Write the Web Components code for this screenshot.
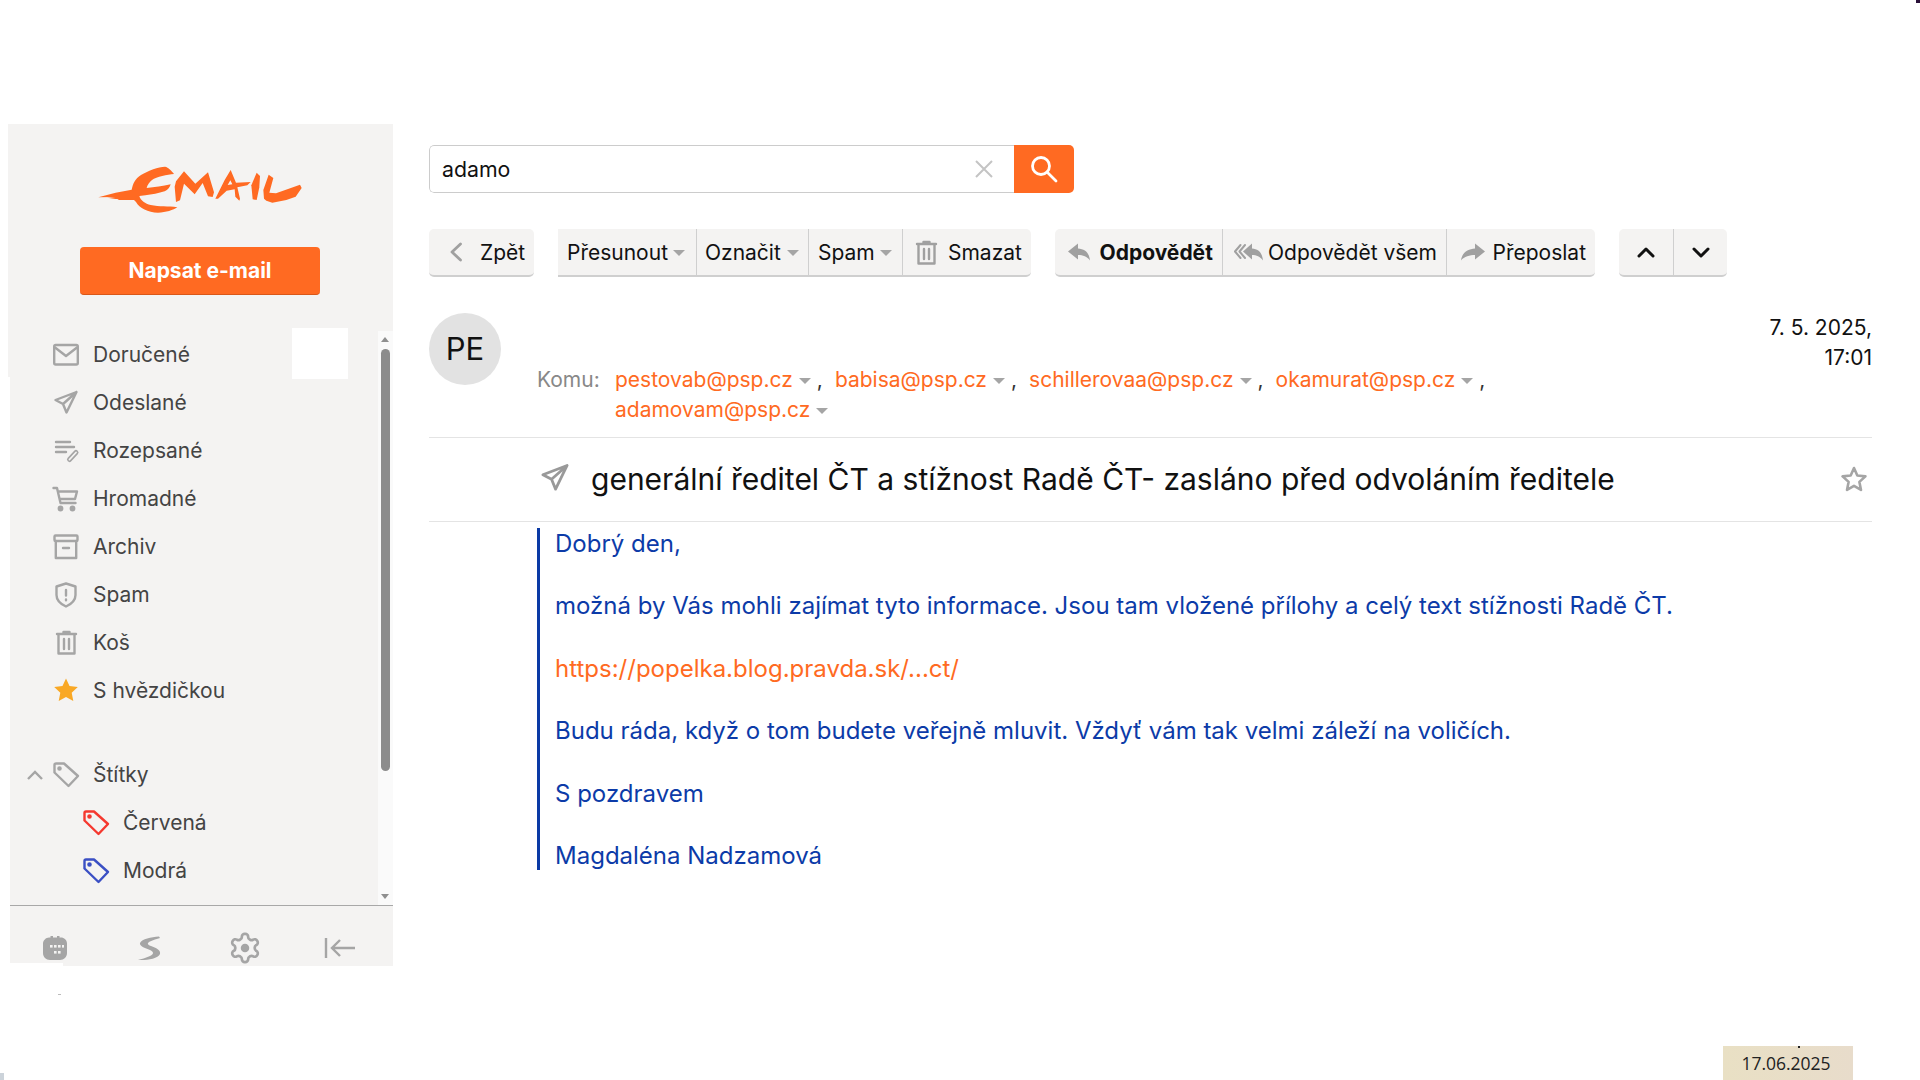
<!DOCTYPE html>
<html lang="cs">
<head>
<meta charset="utf-8">
<title>Email</title>
<style>
  html, body { margin: 0; padding: 0; background: #fff; }
  body { font-family: Inter, "Liberation Sans", sans-serif; width: 1920px; height: 1080px; overflow: hidden; }
</style>
</head>
<body>
<mail-app>
  <mail-sidebar slot="sidebar">
    <nav-item icon="inbox">Doručené</nav-item>
    <nav-item icon="sent">Odeslané</nav-item>
    <nav-item icon="draft">Rozepsané</nav-item>
    <nav-item icon="cart">Hromadné</nav-item>
    <nav-item icon="archive">Archiv</nav-item>
    <nav-item icon="shield">Spam</nav-item>
    <nav-item icon="trash">Koš</nav-item>
    <nav-item icon="star">S hvězdičkou</nav-item>
    <nav-item icon="tag" toggle style="margin-top:36px">Štítky</nav-item>
    <nav-item icon="tag" color="#f5382f" sub>Červená</nav-item>
    <nav-item icon="tag" color="#3a4fc4" sub>Modrá</nav-item>
  </mail-sidebar>

  <mail-search value="adamo"></mail-search>

  <mail-toolbar>
    <tool-group>
      <tool-button icon="back" w="105" gap="17">Zpět</tool-button>
    </tool-group>
    <tool-group square>
      <tool-button caret w="138" pad="9">Přesunout</tool-button>
      <tool-button caret w="112">Označit</tool-button>
      <tool-button caret w="94" pad="9">Spam</tool-button>
      <tool-button icon="trash" w="129" pad="10" gap="9">Smazat</tool-button>
    </tool-group>
    <tool-group>
      <tool-button icon="reply" iw="30" w="167" gap="6.500" bold>Odpovědět</tool-button>
      <tool-button icon="replyall" iw="32" w="224" gap="5">Odpovědět všem</tool-button>
      <tool-button icon="forward" iw="30" w="149" gap="7.500">Přeposlat</tool-button>
    </tool-group>
    <tool-group>
      <tool-button icon="up" w="54" center></tool-button>
      <tool-button icon="down" w="54" center></tool-button>
    </tool-group>
  </mail-toolbar>

  <mail-header initials="PE" date="7. 5. 2025,|17:01">
    <mail-recipient>pestovab@psp.cz</mail-recipient>
    <mail-recipient>babisa@psp.cz</mail-recipient>
    <mail-recipient>schillerovaa@psp.cz</mail-recipient>
    <mail-recipient>okamurat@psp.cz</mail-recipient>
    <mail-recipient last>adamovam@psp.cz</mail-recipient>
  </mail-header>

  <mail-subject>generální ředitel ČT a stížnost Radě ČT- zasláno před odvoláním ředitele</mail-subject>

  <mail-body>
    <p>Dobrý den,</p>
    <p>možná by Vás mohli zajímat tyto informace. Jsou tam vložené přílohy a celý text stížnosti Radě ČT.</p>
    <p><a style="color:#ff6a22">https://popelka.blog.pravda.sk/...ct/</a></p>
    <p>Budu ráda, když o tom budete veřejně mluvit. Vždyť vám tak velmi záleží na voličích.</p>
    <p>S pozdravem</p>
    <p>Magdaléna Nadzamová</p>
  </mail-body>

  <date-badge slot="overlay">17.06.2025</date-badge>
</mail-app>

<script>
const GREY = "#a5a5a5";

// nav and toolbar icons share a 26 high box, a few toolbar arrows are wider
const ICONS = {
  inbox: `<rect x="1.200" y="4" width="23.600" height="19.500" rx="1.500"/><path d="M2 6.500l11 8.500 11-8.500"/>`,
  sent: `<path d="M23.500 3L2.500 11l7.500 4 3.500 8.500zM23.500 3L10 15"/>`,
  draft: `<path d="M3 5h14M3 10h18M3 15h10"/><path d="M16.500 22.500l6.500-7" stroke-width="5"/><path d="M16.500 22.500l6.500-7" stroke-width="1.800" stroke="#f4f3f2"/>`,
  cart: `<path d="M.5 3h3.500l3.500 15h15M5 6.500h19l-2 7.500H7"/><circle cx="7.500" cy="23.500" r="1.700" fill="currentColor"/><circle cx="19.500" cy="23.500" r="1.700" fill="currentColor"/>`,
  archive: `<rect x="1.500" y="2.500" width="23" height="5.500" rx="1"/><path d="M2.800 8v17h20.400V8M10 15h6"/>`,
  shield: `<path d="M13 2.500l9.500 3v8.500c0 5.500-4 9-9.500 11.500C7.500 23 3.500 19.500 3.500 14V5.500z"/><path d="M13 9v5.500M13 18.500v.8"/>`,
  trash: `<path d="M4 5h19M10.500 5V3h6v2M5.500 5v19.500h16V5M11 10v10M16 10v10"/>`,
  star: `<path d="M13 1.500l3.500 7.600 8.300 1-6.100 5.700 1.600 8.200-7.300-4.100-7.300 4.100 1.600-8.200-6.100-5.700 8.300-1z" fill="#f9a825" stroke="none"/>`,
  tag: `<path d="M1.500 4c0-1 .5-1.500 1.500-1.500h8l14 12.500-9.500 10L1.500 11.500z"/><circle cx="6.500" cy="7.500" r="1.100" fill="currentColor"/>`,
  back: `<path d="M23.500 5l-8.500 8 8.500 8" stroke-width="2.800"/>`,
  reply: `<path d="M15 4.500L5 12.500l10 8V16c5 0 9 1.500 12 5.500-1-8-5-11.500-12-12z" fill="currentColor" stroke="none"/>`,
  replyall: `<path d="M21 4.500l-9 8 9 8V16c4.500 0 8 1.500 11 5.500-1-8-4.500-11.500-11-12z" fill="currentColor" stroke="none"/><path d="M9.500 6L4 12.500l5.500 6.500M14 6L8.500 12.500 14 19" stroke-width="2"/>`,
  forward: `<path d="M20 4.500l10 8-10 8V16c-5 0-11 1.500-14 5.500 1-8 7-11.500 14-12z" fill="currentColor" stroke="none"/>`,
  up: `<path d="M6 17l7-7 7 7" stroke-width="3" stroke="#111"/>`,
  down: `<path d="M6 10l7 7 7-7" stroke-width="3" stroke="#111"/>`
};

function iconSvg(name, size = 26, width = size) {
  return `<svg viewBox="0 0 ${width * 26 / size} 26" width="${width}" height="${size}" fill="none" stroke="currentColor" stroke-width="2.400" stroke-linecap="round" stroke-linejoin="round" aria-hidden="true" style="overflow:visible">${ICONS[name]}</svg>`;
}

class MailApp extends HTMLElement {
  constructor() {
    super();
    this.attachShadow({ mode: "open" });
    this.shadowRoot.innerHTML = `
      <style>
        :host {
          display: grid;
          grid-template-columns: 383px 1443px;
          column-gap: 36px;
          padding: 124px 0 0 10px;
          height: 1080px;
          box-sizing: border-box;
          position: relative;
        }
        .main { display: flex; flex-direction: column; padding-top: 21px; }
        /* stray pixels left in the corners of the screenshot */
        .speck { position: absolute; }
        .speck.a { left: 1916px; top: 0; width: 4px; height: 3px; background: #2a1038; }
        .speck.b { left: 58px; top: 994px; width: 3px; height: 1px; background: #bbb; }
        .speck.c { left: 0; top: 1073px; width: 4px; height: 7px; background: #ccd3da; }
      </style>
      <slot name="sidebar"></slot>
      <div class="main"><slot></slot></div>
      <slot name="overlay"></slot>
      <i class="speck a"></i><i class="speck b"></i><i class="speck c"></i>
    `;
  }
}

class MailSidebar extends HTMLElement {
  constructor() {
    super();
    this.attachShadow({ mode: "open" });
    this.shadowRoot.innerHTML = `
      <style>
        :host {
          display: flex;
          flex-direction: column;
          height: 842px;
          background: #f4f3f2;
          position: relative;
        }
        /* uneven edges of the panel in the reference */
        :host::before {
          content: "";
          position: absolute;
          left: -2px;
          top: 0;
          width: 2px;
          height: 253px;
          background: #f4f3f2;
        }
        :host::after {
          content: "";
          position: absolute;
          left: 0;
          bottom: 0;
          width: 53px;
          height: 3px;
          background: #fff;
        }
        .logo { display: block; margin: 26px 0 0 70px; }
        .write {
          display: flex;
          align-items: center;
          justify-content: center;
          width: 240px;
          height: 48px;
          margin: 7px 0 0 70px;
          box-sizing: border-box;
          background: #ff6a22;
          border-bottom: 1px solid #d9581a;
          border-radius: 4px;
          color: #fff;
          font-size: 21px;
          font-weight: 700;
        }
        .list {
          flex: 1;
          min-height: 0;
          position: relative;
          margin-top: 35px;
        }
        .blank {
          position: absolute;
          left: 282px;
          top: -2px;
          width: 56px;
          height: 51px;
          background: #fff;
        }
        .scroll {
          position: absolute;
          right: 0;
          top: 1px;
          bottom: 0;
          width: 15px;
          background: #fafafa;
        }
        .thumb {
          position: absolute;
          left: 3px;
          top: 18px;
          width: 9px;
          height: 422px;
          background: #8c8c8c;
          border-radius: 5px;
        }
        .arrow {
          position: absolute;
          left: 3px;
          width: 0;
          height: 0;
          border-left: 4.500px solid transparent;
          border-right: 4.500px solid transparent;
        }
        .arrow.up { top: 6px; border-bottom: 5px solid #8f8f8f; }
        .arrow.down { bottom: 6px; border-top: 5px solid #8f8f8f; }
        .foot {
          height: 61px;
          box-sizing: border-box;
          border-top: 1px solid #a8a8a8;
          padding-top: 24px;
          display: grid;
          grid-template-columns: repeat(4, 95px);
          color: ${GREY};
        }
        .foot div { display: flex; height: 36px; align-items: center; justify-content: center; margin-left: -6px; }
      </style>
      <svg class="logo" viewBox="0 0 720 270" width="240" height="90" fill="#ff6a22" role="img" aria-label="Email">
        <path d="M55 142l52-14 48-9c4-18 10-33 28-44 22-13 52-25 72-25 10 2 20 12 27 22-20 2-52 8-66 18-8 6-14 15-16 24 24-2 48-6 72-11-2 8-8 17-18 21-18 6-38 10-58 12l-18 2c4 14 18 23 34 27 26 6 52 2 80 7-12 8-34 16-58 16-30 0-56-14-66-32l-6-6-50 0 5-3-30 0 20-3-26-1 24-2z"/>
        <path d="M288 156l-4-46 4-16 24-30 34 37 38-34 18 60-4 14-14-2-16-40-24 34-32-32-12 50z"/>
        <path fill-rule="evenodd" d="M406 146l28-56 18-30 16 38 44-2-10 10-30 6 8 34-2 6-12-12-2-22-24 4-26 24zM451 91l-8 14 14-2z"/>
        <path d="M518 148l-4-42 16-38 10 10-2 34-8 38z"/>
        <path d="M552 146l-2-26 16-46 14 10-12 44 20 2 72-26 5 10-18 26-28 10-42 8-18-6z"/>
      </svg>
      <div class="write">Napsat e-mail</div>
      <div class="list">
        <slot></slot>
        <div class="blank"></div>
        <div class="scroll">
          <div class="arrow up"></div>
          <div class="thumb"></div>
          <div class="arrow down"></div>
        </div>
      </div>
      <div class="foot">
        <div>
          <svg viewBox="0 0 24 24" width="24" height="24" fill="currentColor"><path d="M6 1.500h1.500V0h2.500v1.500h4V0h2.500v1.500H18c3 0 6 2.500 6 6V17c0 4-3 7-7 7H7c-4 0-7-3-7-7V7.500c0-3 3-6 6-6z"/><g fill="#f4f3f2"><rect x="7" y="9" width="2.600" height="2.600"/><rect x="11" y="9" width="2.600" height="2.600"/><rect x="15" y="9" width="2.600" height="2.600"/><rect x="19" y="9" width="2" height="2.600"/><rect x="11" y="15" width="2.600" height="2.600"/><rect x="15" y="15" width="2.600" height="2.600"/></g></svg>
        </div>
        <div>
          <svg viewBox="0 0 26 26" width="26" height="26" fill="currentColor"><path d="M22 1.500C14 2 5 4 3 8c-1 3 5 5 10 7 4 2 4 4 0 6-4 2-9 3-12 4 8 .5 20-1 22-6 1-4-4-6-9-8-4-1.500-4-3-1-4.500 3-1.500 7-2.500 10-3.500z"/></svg>
        </div>
        <div>
          <svg viewBox="0 0 24 24" width="34" height="34" fill="none" stroke="currentColor" stroke-width="1.900" stroke-linejoin="round"><path d="M12.220 2h-.44a2 2 0 0 0-2 2v.18a2 2 0 0 1-1 1.730l-.43.250a2 2 0 0 1-2 0l-.15-.08a2 2 0 0 0-2.730.73l-.22.38a2 2 0 0 0 .73 2.730l.15.1a2 2 0 0 1 1 1.720v.51a2 2 0 0 1-1 1.740l-.15.09a2 2 0 0 0-.73 2.730l.22.38a2 2 0 0 0 2.730.73l.15-.08a2 2 0 0 1 2 0l.43.25a2 2 0 0 1 1 1.730V20a2 2 0 0 0 2 2h.44a2 2 0 0 0 2-2v-.18a2 2 0 0 1 1-1.730l.43-.25a2 2 0 0 1 2 0l.15.08a2 2 0 0 0 2.730-.73l.22-.39a2 2 0 0 0-.73-2.730l-.15-.08a2 2 0 0 1-1-1.740v-.5a2 2 0 0 1 1-1.740l.15-.09a2 2 0 0 0 .73-2.730l-.22-.38a2 2 0 0 0-2.730-.73l-.15.08a2 2 0 0 1-2 0l-.43-.25a2 2 0 0 1-1-1.730V4a2 2 0 0 0-2-2z"/><circle cx="12" cy="12" r="3" fill="currentColor" stroke="none"/></svg>
        </div>
        <div>
          <svg viewBox="0 0 32 26" width="32" height="26" fill="none" stroke="currentColor" stroke-width="2.400"><path d="M2 3v20M31 13H9M16 5l-8 8 8 8"/></svg>
        </div>
      </div>
    `;
  }
}

class NavItem extends HTMLElement {
  constructor() {
    super();
    this.attachShadow({ mode: "open" });
  }

  connectedCallback() {
    const sub = this.hasAttribute("sub");
    const color = this.getAttribute("color") || GREY;
    const toggle = this.hasAttribute("toggle")
      ? `<svg class="toggle" viewBox="0 0 16 10" width="16" height="10" fill="none" stroke="${GREY}" stroke-width="2.400"><path d="M1 9l7-7 7 7"/></svg>`
      : "";
    this.shadowRoot.innerHTML = `
      <style>
        :host {
          display: flex;
          align-items: center;
          height: 48px;
          padding-left: ${sub ? 73 : 43}px;
          position: relative;
          color: #444;
          font-size: 21px;
        }
        .ic { display: flex; color: ${color}; margin-right: 14px; }
        .toggle { position: absolute; left: 17px; top: 20px; }
      </style>
      ${toggle}
      <span class="ic">${iconSvg(this.getAttribute("icon"))}</span>
      <slot></slot>
    `;
  }
}

class MailSearch extends HTMLElement {
  constructor() {
    super();
    this.attachShadow({ mode: "open" });
  }

  connectedCallback() {
    this.shadowRoot.innerHTML = `
      <style>
        :host {
          display: flex;
          width: 645px;
          height: 48px;
          box-sizing: border-box;
          border-radius: 5px;
          overflow: hidden;
          font-size: 21.300px;
          color: #111;
        }
        .field {
          flex: 1;
          display: flex;
          align-items: center;
          justify-content: space-between;
          padding: 0 21px 0 12px;
          border: 1px solid #ccc;
          border-right: none;
          border-radius: 5px 0 0 5px;
        }
        .go {
          width: 60px;
          background: #ff6a22;
          display: flex;
          align-items: center;
          justify-content: center;
        }
      </style>
      <div class="field">
        <span>${this.getAttribute("value")}</span>
        <svg viewBox="0 0 18 18" width="18" height="18" stroke="#c4c4c4" stroke-width="2"><path d="M1 1l16 16M17 1L1 17"/></svg>
      </div>
      <div class="go">
        <svg viewBox="0 0 28 28" width="28" height="28" fill="none" stroke="#fff" stroke-width="2.800" stroke-linecap="round"><circle cx="11" cy="11" r="8.500"/><path d="M17 17l9 9"/></svg>
      </div>
    `;
  }
}

class MailToolbar extends HTMLElement {
  constructor() {
    super();
    this.attachShadow({ mode: "open" });
    this.shadowRoot.innerHTML = `
      <style>
        :host { display: flex; gap: 24px; margin-top: 36px; height: 48px; }
      </style>
      <slot></slot>
    `;
  }
}

class ToolGroup extends HTMLElement {
  constructor() {
    super();
    this.attachShadow({ mode: "open" });
  }

  connectedCallback() {
    const radius = this.hasAttribute("square") ? "0 5px 5px 0" : "5px";
    this.shadowRoot.innerHTML = `
      <style>
        :host {
          display: flex;
          background: #f4f3f2;
          border-bottom: 2px solid #cfcfcf;
          border-radius: ${radius};
          box-sizing: border-box;
          height: 48px;
        }
        ::slotted(tool-button:not(:first-child)) { border-left: 1px solid #cfcfcf; }
      </style>
      <slot></slot>
    `;
  }
}

class ToolButton extends HTMLElement {
  constructor() {
    super();
    this.attachShadow({ mode: "open" });
  }

  connectedCallback() {
    const icon = this.getAttribute("icon");
    const caret = this.hasAttribute("caret") ? `<span class="caret"></span>` : "";
    const center = this.hasAttribute("center");
    const pad = center ? 0 : this.getAttribute("pad") || 8;
    const iw = Number(this.getAttribute("iw")) || 26;
    this.shadowRoot.innerHTML = `
      <style>
        :host {
          display: flex;
          align-items: center;
          justify-content: ${center ? "center" : "flex-start"};
          box-sizing: border-box;
          width: ${this.getAttribute("w")}px;
          padding-left: ${pad}px;
          font-size: 21px;
          font-weight: ${this.hasAttribute("bold") ? 700 : 400};
          color: #111;
          white-space: nowrap;
        }
        .ic { display: flex; color: #a0a0a0; margin-right: ${this.getAttribute("gap") || 0}px; }
        .caret {
          width: 0;
          height: 0;
          margin: 2px 0 0 ${Number(pad) === 9 ? 5 : 6}px;
          border-left: 6px solid transparent;
          border-right: 6px solid transparent;
          border-top: 6px solid ${GREY};
        }
      </style>
      ${icon ? `<span class="ic">${iconSvg(icon, 26, iw)}</span>` : ""}
      <slot></slot>
      ${caret}
    `;
  }
}

class MailHeader extends HTMLElement {
  constructor() {
    super();
    this.attachShadow({ mode: "open" });
  }

  connectedCallback() {
    const date = this.getAttribute("date").split("|").join("<br>");
    this.shadowRoot.innerHTML = `
      <style>
        :host {
          display: flex;
          align-items: flex-start;
          box-sizing: border-box;
          height: 125px;
          margin-top: 36px;
          border-bottom: 1px solid #e4e4e4;
          font-size: 21px;
          line-height: 30px;
        }
        .avatar {
          flex: none;
          width: 72px;
          height: 72px;
          border-radius: 50%;
          background: #e2e2e2;
          display: flex;
          align-items: center;
          justify-content: center;
          font-size: 31px;
          color: #111;
        }
        .komu { flex: none; width: 78px; margin: 52px 0 0 36px; color: #888; }
        .to { display: flex; flex-wrap: wrap; width: 1000px; margin-top: 52px; }
        .date { margin-left: auto; text-align: right; color: #111; }
      </style>
      <div class="avatar">${this.getAttribute("initials")}</div>
      <div class="komu">Komu:</div>
      <div class="to"><slot></slot></div>
      <div class="date">${date}</div>
    `;
  }
}

class MailRecipient extends HTMLElement {
  constructor() {
    super();
    this.attachShadow({ mode: "open" });
  }

  connectedCallback() {
    this.shadowRoot.innerHTML = `
      <style>
        :host { display: flex; align-items: center; color: #ff6a22; }
        .caret {
          width: 0;
          height: 0;
          margin: 2px 0 0 6px;
          border-left: 6px solid transparent;
          border-right: 6px solid transparent;
          border-top: 6px solid ${GREY};
        }
        .comma { color: #333; margin: 0 12px 0 6px; }
      </style>
      <slot></slot>
      <span class="caret"></span>
      ${this.hasAttribute("last") ? "" : `<span class="comma">,</span>`}
    `;
  }
}

class MailSubject extends HTMLElement {
  constructor() {
    super();
    this.attachShadow({ mode: "open" });
    this.shadowRoot.innerHTML = `
      <style>
        :host {
          display: flex;
          align-items: center;
          box-sizing: border-box;
          height: 84px;
          padding: 0 0 2px 111px;
          border-bottom: 1px solid #e4e4e4;
          font-size: 30px;
          color: #111;
        }
        .sent { display: flex; color: #999; margin-right: 21px; margin-top: -3px; }
        .text { flex: 1; }
        .fav { display: flex; color: ${GREY}; margin-right: 5px; }
      </style>
      <span class="sent">${iconSvg("sent", 30)}</span>
      <span class="text"><slot></slot></span>
      <span class="fav">
        <svg viewBox="0 0 26 26" width="26" height="26" fill="none" stroke="currentColor" stroke-width="2.600" stroke-linejoin="round"><path d="M13 2l3.300 7.500 8.100.9-6 5.500 1.600 8-7-4.100-7 4.100 1.600-8-6-5.500 8.100-.9z"/></svg>
      </span>
    `;
  }
}

class MailBody extends HTMLElement {
  constructor() {
    super();
    this.attachShadow({ mode: "open" });
    this.shadowRoot.innerHTML = `
      <style>
        :host {
          display: block;
          box-sizing: border-box;
          height: 342px;
          margin: 6px 0 0 108px;
          padding: 1px 0 0 15px;
          border-left: 3px solid #0b3aa5;
          font-size: 24px;
          line-height: 30px;
          color: #0c3ba8;
        }
        ::slotted(p) { margin: 0 0 32.400px; }
      </style>
      <slot></slot>
    `;
  }
}

class DateBadge extends HTMLElement {
  constructor() {
    super();
    this.attachShadow({ mode: "open" });
    this.shadowRoot.innerHTML = `
      <style>
        :host {
          position: absolute;
          left: 1723px;
          top: 1046px;
          width: 130px;
          height: 34px;
          box-sizing: border-box;
          padding-right: 4px;
          display: flex;
          align-items: center;
          justify-content: center;
          background: linear-gradient(90deg, #e9e0c4, #e8dccb);
          font-family: "Open Sans", sans-serif;
          font-size: 17.500px;
          color: #222;
        }
        .dot { position: absolute; left: 75px; top: 0; width: 2px; height: 2px; background: #222; }
      </style>
      <span class="dot"></span>
      <slot></slot>
    `;
  }
}

customElements.define("mail-app", MailApp);
customElements.define("mail-sidebar", MailSidebar);
customElements.define("nav-item", NavItem);
customElements.define("mail-search", MailSearch);
customElements.define("mail-toolbar", MailToolbar);
customElements.define("tool-group", ToolGroup);
customElements.define("tool-button", ToolButton);
customElements.define("mail-header", MailHeader);
customElements.define("mail-recipient", MailRecipient);
customElements.define("mail-subject", MailSubject);
customElements.define("mail-body", MailBody);
customElements.define("date-badge", DateBadge);
</script>
</body>
</html>
